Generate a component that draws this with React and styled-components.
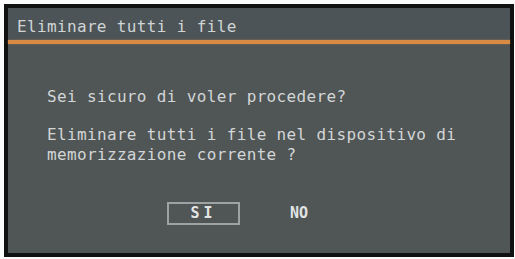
import React from 'react';
import styled, { createGlobalStyle } from 'styled-components';

const Global = createGlobalStyle`
  html, body {
    margin: 0;
    padding: 0;
    background: #fbfbfb;
  }
  body {
    width: 515px;
    height: 259px;
    overflow: hidden;
  }
`;

const Frame = styled.div`
  box-sizing: border-box;
  margin: 4px 0 0 4px;
  width: 510px;
  height: 253px;
  border: 4px solid #101111;
  background: #505556;
  display: flex;
  flex-direction: column;
  font-family: 'DejaVu Sans Mono', 'Liberation Mono', monospace;
  font-size: 16px;
  letter-spacing: 0.35px;
  color: #d3d6d6;
`;

const TitleBar = styled.div`
  box-sizing: border-box;
  height: 32px;
  padding: 9px 0 0 9px;
  line-height: 20px;
  background: #4c5458;
  color: #d0d4d5;
`;

const Rule = styled.div`
  height: 4px;
  background: #d98a45;
  box-shadow: 0 0 2px rgba(217, 138, 69, 0.6);
`;

const Body = styled.div`
  display: flex;
  flex-direction: column;
  padding: 43px 0 0 39px;
  line-height: 20px;
`;

const Para = styled.p`
  margin: 0 0 ${p => p.gap || 0}px 0;
  white-space: pre;
`;

const Buttons = styled.div`
  display: flex;
  align-items: center;
  padding: 37px 0 0 159px;
`;

const Button = styled.div`
  box-sizing: border-box;
  width: ${p => (p.selected ? '73px' : 'auto')};
  height: 23px;
  display: flex;
  align-items: center;
  justify-content: center;
  border: 2px solid ${p => (p.selected ? '#9da2a3' : 'transparent')};
  margin-right: ${p => (p.selected ? '48px' : '0')};
  letter-spacing: ${p => (p.selected ? '4px' : '0')};
  font-weight: bold;
  font-size: 15px;
  color: #e2e4e4;
  line-height: 1;
`;

export default function App() {
  return (
    <>
      <Global />
      <Frame>
        <TitleBar>Eliminare tutti i file</TitleBar>
        <Rule />
        <Body>
          <Para gap={18}>Sei sicuro di voler procedere?</Para>
          <Para>Eliminare tutti i file nel dispositivo di</Para>
          <Para>memorizzazione corrente ?</Para>
        </Body>
        <Buttons>
          <Button selected>SI</Button>
          <Button>NO</Button>
        </Buttons>
      </Frame>
    </>
  );
}
